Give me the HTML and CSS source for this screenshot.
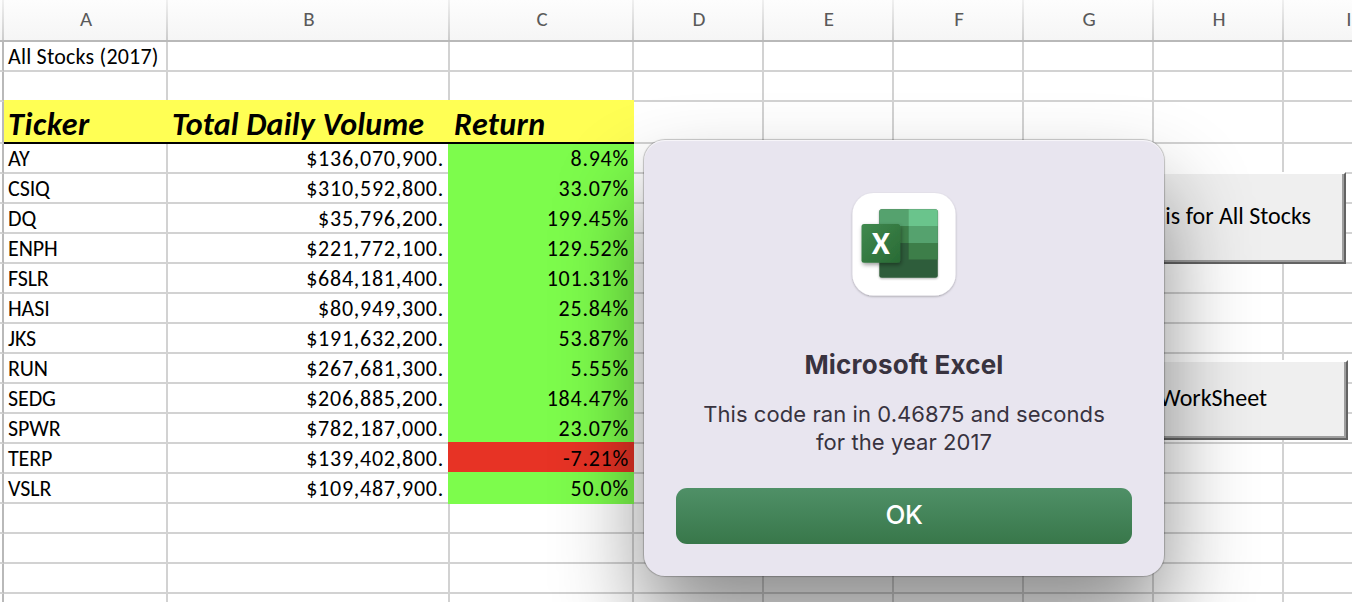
FILE: index.html
```
<!DOCTYPE html>
<html lang="en">
<head>
<meta charset="utf-8">
<title>All Stocks (2017)</title>
<link rel="stylesheet" href="styles.css">
</head>
<body>
<main class="sheet">
  <div class="row head"><i class="edge"></i><b class="a">A</b><b class="b">B</b><b class="c">C</b><b class="d">D</b><b class="d">E</b><b class="d">F</b><b class="d">G</b><b class="d">H</b><b class="d">I</b></div>
  <div class="row"><i class="edge"></i><div class="a title">All Stocks (2017)</div><div class="b"></div><div class="c"></div><div class="rest"></div></div>
  <div class="row"><i class="edge"></i><div class="a"></div><div class="b"></div><div class="c"></div><div class="rest"></div></div>
  <div class="row labels"><i class="edge"></i><div class="a">Ticker</div><div class="b">Total Daily Volume</div><div class="c">Return</div><div class="rest"></div></div>
  <div class="row"><i class="edge"></i><div class="a">AY</div><div class="b">$136,070,900.</div><div class="c up first">8.94%</div><div class="rest"></div></div>
  <div class="row"><i class="edge"></i><div class="a">CSIQ</div><div class="b">$310,592,800.</div><div class="c up">33.07%</div><div class="rest"></div></div>
  <div class="row"><i class="edge"></i><div class="a">DQ</div><div class="b">$35,796,200.</div><div class="c up">199.45%</div><div class="rest"></div></div>
  <div class="row"><i class="edge"></i><div class="a">ENPH</div><div class="b">$221,772,100.</div><div class="c up">129.52%</div><div class="rest"></div></div>
  <div class="row"><i class="edge"></i><div class="a">FSLR</div><div class="b">$684,181,400.</div><div class="c up">101.31%</div><div class="rest"></div></div>
  <div class="row"><i class="edge"></i><div class="a">HASI</div><div class="b">$80,949,300.</div><div class="c up">25.84%</div><div class="rest"></div></div>
  <div class="row"><i class="edge"></i><div class="a">JKS</div><div class="b">$191,632,200.</div><div class="c up">53.87%</div><div class="rest"></div></div>
  <div class="row"><i class="edge"></i><div class="a">RUN</div><div class="b">$267,681,300.</div><div class="c up">5.55%</div><div class="rest"></div></div>
  <div class="row"><i class="edge"></i><div class="a">SEDG</div><div class="b">$206,885,200.</div><div class="c up">184.47%</div><div class="rest"></div></div>
  <div class="row"><i class="edge"></i><div class="a">SPWR</div><div class="b">$782,187,000.</div><div class="c up">23.07%</div><div class="rest"></div></div>
  <div class="row"><i class="edge"></i><div class="a">TERP</div><div class="b">$139,402,800.</div><div class="c down">-7.21%</div><div class="rest"></div></div>
  <div class="row"><i class="edge"></i><div class="a">VSLR</div><div class="b">$109,487,900.</div><div class="c up">50.0%</div><div class="rest"></div></div>
  <div class="row"><i class="edge"></i><div class="a"></div><div class="b"></div><div class="c"></div><div class="rest"></div></div>
  <div class="row"><i class="edge"></i><div class="a"></div><div class="b"></div><div class="c"></div><div class="rest"></div></div>
  <div class="row"><i class="edge"></i><div class="a"></div><div class="b"></div><div class="c"></div><div class="rest"></div></div>
  <div class="row"><i class="edge"></i><div class="a"></div><div class="b"></div><div class="c"></div><div class="rest"></div></div>

  <div class="macro run"><span>is for All Stocks</span></div>
  <div class="macro clear"><span>WorkSheet</span></div>

  <section class="dialog" role="dialog">
    <svg class="icon" width="112" height="112" viewBox="0 0 112 112">
      <defs>
        <linearGradient id="tile" x1="0" y1="0" x2="1" y2="1"><stop offset="0" stop-color="#40894f"/><stop offset="1" stop-color="#296a34"/></linearGradient>
        <filter id="soft" x="-20%" y="-20%" width="140%" height="140%"><feDropShadow dx="0" dy="1" stdDeviation="1.2" flood-opacity=".3"/></filter>
        <filter id="drop" x="-30%" y="-30%" width="160%" height="160%"><feDropShadow dx="1" dy="2" stdDeviation="2" flood-opacity=".4"/></filter>
        <clipPath id="book"><rect x="31.300" y="21.300" width="58.500" height="68.400" rx="2.500"/></clipPath>
      </defs>
      <rect x="4.500" y="5" width="103" height="102.500" rx="21" fill="#fff" filter="url(#soft)"/>
      <g filter="url(#soft)"><g clip-path="url(#book)">
        <path fill="#2f5d3a" d="M31 21h60v70H31z"/>
        <path fill="#55a26e" d="M31 21h30v17H31z"/>
        <path fill="#6bc48c" d="M60.700 21H91v17H60.700z"/>
        <path fill="#3d7e49" d="M31 38h30v17H31z"/>
        <path fill="#55a26e" d="M60.700 38H91v17H60.700z"/>
        <path fill="#3d7e49" d="M60.700 55H91v16.500H60.700z"/>
      </g></g>
      <rect x="13.500" y="36" width="38.700" height="38.700" rx="2.500" fill="url(#tile)" filter="url(#drop)"/>
      <text class="mark" x="32.800" y="65.800" text-anchor="middle">X</text>
    </svg>
    <h1>Microsoft Excel</h1>
    <p>This code ran in 0.46875 and seconds<br>for the year 2017</p>
    <button class="ok">OK</button>
  </section>
</main>
</body>
</html>
```
FILE: styles.css
```
* { box-sizing: border-box; }
body { margin: 0; background: #fff; }
.sheet {
  position: relative;
  width: 1352px;
  height: 602px;
  overflow: hidden;
  font: 22px/30px Carlito, Lato, sans-serif;
  color: #000;
}
.row { display: flex; width: 1414px; height: 30px; white-space: nowrap; }
.row > * { flex: none; border-right: 2px solid #d2d2d2; border-bottom: 2px solid #d2d2d2; }
.row > .edge { width: 4px; border-right-color: #b9b9b9; }
.a { width: 164px; padding-left: 4px; letter-spacing: -0.1px; }
.title { letter-spacing: 0.2px; }
.b { width: 282px; padding-right: 4px; text-align: right; letter-spacing: 0.75px; }
.c { width: 184px; padding-right: 3px; text-align: right; letter-spacing: 0.75px; }
.d { width: 130px; }
.row > .rest {
  width: 780px;
  border-right: 0;
  background: repeating-linear-gradient(90deg, transparent 0 128px, #d2d2d2 128px 130px);
}
.row.head { height: 42px; background: linear-gradient(#fdfdfd, #f5f5f5); box-shadow: inset 0 -2px #b9b9b9; }
.row.head > * {
  height: 40px;
  border-bottom: 0;
  border-image: linear-gradient(#f2f2f2, #cacaca) 2;
  padding: 0 0 0 2px;
  text-align: center;
  font-size: 21px;
  font-weight: 400;
  line-height: 39px;
  letter-spacing: 0;
  color: #5a5a5a;
}
.row.labels { height: 42px; font: italic 700 32px/45px Carlito, Lato, sans-serif; }
.row.labels > .a, .row.labels > .b, .row.labels > .c {
  padding-left: 4px;
  text-align: left;
  background: #ffff54;
  border-right: 0;
  border-bottom: 2px solid #000;
  box-shadow: 0 -2px #ffff54;
}
.labels > .a { letter-spacing: 0.6px; }
.labels > .b { letter-spacing: 0.2px; }
.labels > .c { letter-spacing: 0.4px; }
.row > .up { background: #7dfc4c; border-color: #7dfc4c; box-shadow: -2px 0 #7dfc4c, -2px -2px #7dfc4c, 0 -2px #7dfc4c; }
.row > .first { box-shadow: -2px 0 #7dfc4c; }
.row > .down { background: #e73325; border-color: #e73325; box-shadow: -2px 0 #e73325, -2px -2px #e73325, 0 -2px #e73325; }
.macro {
  position: absolute;
  display: flex;
  align-items: center;
  justify-content: flex-end;
  background: #efefef;
  border-top: 2px solid #fff;
  border-right: 2px solid #636363;
  border-bottom: 2px solid #636363;
  box-shadow: inset -2px -2px #9e9e9e;
  font-size: 24px;
  line-height: 28px;
  white-space: nowrap;
}
.run { left: 1000px; top: 172px; width: 346px; height: 92px; padding: 0 33px 4px 0; }
.clear { left: 1000px; top: 360px; width: 348px; height: 80px; padding: 0 79px 4px 0; }
.dialog {
  position: absolute;
  left: 644px;
  top: 140px;
  width: 520px;
  height: 436px;
  padding: 48px 32px 32px;
  display: flex;
  flex-direction: column;
  align-items: center;
  border-radius: 21px;
  background: #e8e5ef;
  box-shadow: 0 0 1px 1px rgba(0,0,0,.22), inset 0 1px 1px rgba(255,255,255,.7), 0 50px 88px rgba(0,0,0,.45);
  font-family: Inter, sans-serif;
  color: #38333f;
}
.icon { flex: none; }
.mark { font: 700 33px Carlito, Lato, sans-serif; fill: #fff; }
h1 { margin: 47px 0 0; font-size: 26px; line-height: 36px; font-weight: 700; letter-spacing: 0.2px; white-space: nowrap; }
p { margin: 17px 0 0; font-size: 22px; line-height: 28px; letter-spacing: 0.07px; text-align: center; white-space: nowrap; }
.ok {
  width: 456px;
  height: 56px;
  margin-top: auto;
  padding: 0 0 2px;
  border: 0;
  border-radius: 11px;
  background: linear-gradient(#4f9067, #38774a);
  color: #fff;
  font: 500 26px/54px Inter, sans-serif;
  letter-spacing: -0.5px;
}
```
